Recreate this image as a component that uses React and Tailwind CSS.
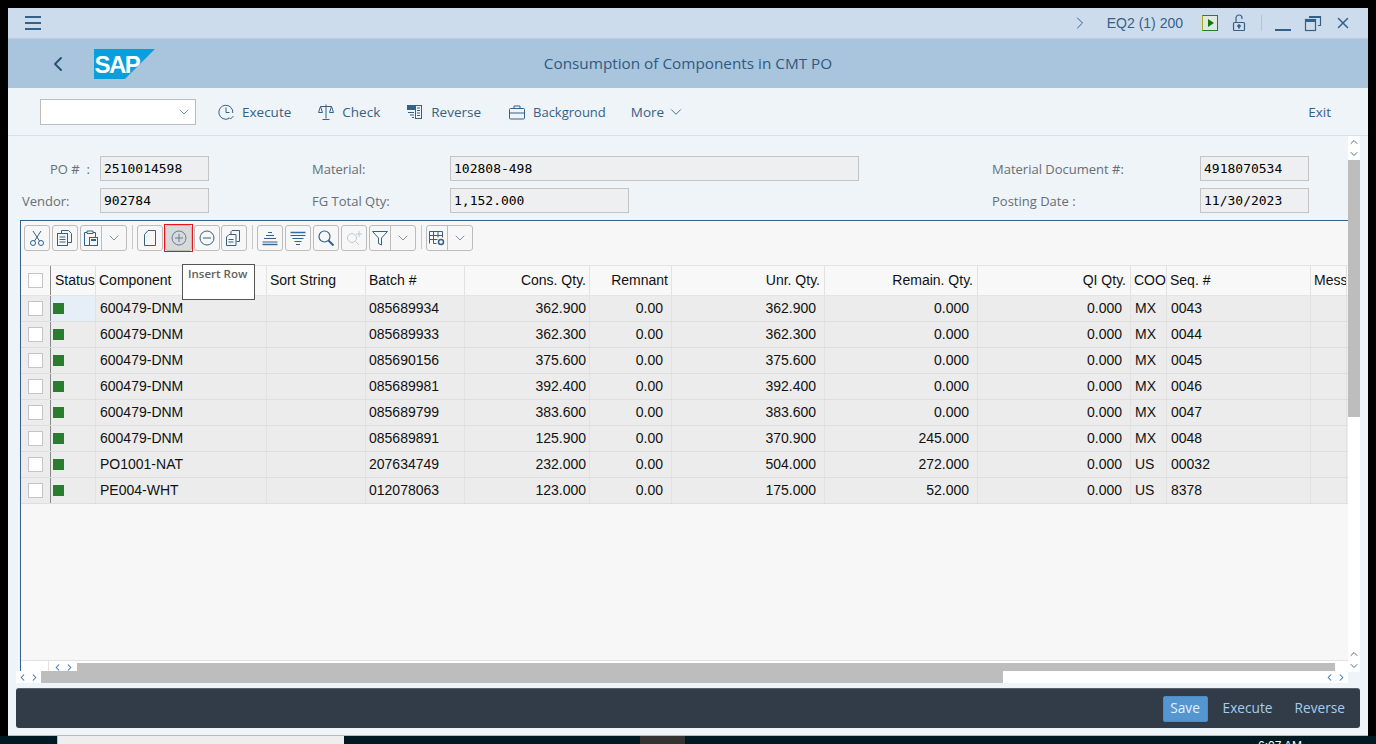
import { ChevronDown, ChevronLeft, ChevronRight, ChevronUp, X } from 'lucide-react'

const uiFont = "font-['Open_Sans',sans-serif]"
const blue = '#346187'

const columns = [
  { label: 'Status', width: 'w-[45px]', head: 'pl-[4px] pr-0', cell: '' },
  { label: 'Component', width: 'w-[171px]', head: 'px-[3px]', cell: 'pl-[4px]' },
  { label: 'Sort String', width: 'w-[99px]', head: 'px-[3px]', cell: 'pl-[4px]' },
  { label: 'Batch #', width: 'w-[99px]', head: 'px-[3px]', cell: 'pl-[3px]' },
  { label: 'Cons. Qty.', width: 'w-[125px]', head: 'justify-end pr-[3px]', cell: 'justify-end pr-[3px]' },
  { label: 'Remnant', width: 'w-[82px]', head: 'justify-end pr-[3px]', cell: 'justify-end pr-[8px]' },
  { label: 'Unr. Qty.', width: 'w-[153px]', head: 'justify-end pr-[4px]', cell: 'justify-end pr-[8px]' },
  { label: 'Remain. Qty.', width: 'w-[153px]', head: 'justify-end pr-[4px]', cell: 'justify-end pr-[8px]' },
  { label: 'QI Qty.', width: 'w-[153px]', head: 'justify-end pr-[4px]', cell: 'justify-end pr-[8px]' },
  { label: 'COO', width: 'w-[36px]', head: 'px-[3px]', cell: 'pl-[4px]' },
  { label: 'Seq. #', width: 'w-[144px]', head: 'px-[3px]', cell: 'pl-[4px]' },
  { label: 'Mess', width: 'w-[36px]', head: 'px-[3px]', cell: 'pl-[4px]' },
]

const rows = [
  ['600479-DNM', '085689934', '362.900', '0.00', '362.900', '0.000', '0.000', 'MX', '0043'],
  ['600479-DNM', '085689933', '362.300', '0.00', '362.300', '0.000', '0.000', 'MX', '0044'],
  ['600479-DNM', '085690156', '375.600', '0.00', '375.600', '0.000', '0.000', 'MX', '0045'],
  ['600479-DNM', '085689981', '392.400', '0.00', '392.400', '0.000', '0.000', 'MX', '0046'],
  ['600479-DNM', '085689799', '383.600', '0.00', '383.600', '0.000', '0.000', 'MX', '0047'],
  ['600479-DNM', '085689891', '125.900', '0.00', '370.900', '245.000', '0.000', 'MX', '0048'],
  ['PO1001-NAT', '207634749', '232.000', '0.00', '504.000', '272.000', '0.000', 'US', '00032'],
  ['PE004-WHT', '012078063', '123.000', '0.00', '175.000', '52.000', '0.000', 'US', '8378'],
]

function Glyph({ children, size = 18, color = blue, box = 18 }) {
  return (
    <svg width={size} height={size} viewBox={`0 0 ${box} ${box}`} fill="none" stroke={color} strokeWidth="1" className="shrink-0">
      {children}
    </svg>
  )
}

function ToolButton({ children, className = '' }) {
  return (
    <div className={`flex h-[26px] w-[26px] shrink-0 items-center justify-center rounded-[3px] border border-[#bcbcbc] bg-[#f7f7f7] ${className}`}>
      {children}
    </div>
  )
}

function ActiveToolButton({ children, className = '' }) {
  return (
    <div className={`relative flex h-[26px] w-[27px] shrink-0 items-center justify-center rounded-[3px] border border-[#bcbcbc] bg-[#d9d9d9] ${className}`}>
      {children}
      <div className="absolute inset-[-2px] border-[1.5px] border-[#e8131b]" />
    </div>
  )
}

function SplitButton({ children, className = '' }) {
  return (
    <div className={`flex h-[26px] w-[47px] shrink-0 items-center rounded-[3px] border border-[#bcbcbc] bg-[#f7f7f7] ${className}`}>
      <div className="flex flex-1 items-center justify-center self-stretch border-r border-[#bcbcbc]">{children}</div>
      <div className="flex w-[24px] items-center justify-center">
        <ChevronDown size={16} strokeWidth={1} color={blue} />
      </div>
    </div>
  )
}

function Divider() {
  return <div className="ml-[5px] mr-[4px] h-[24px] w-px shrink-0 bg-[#c9c9c9]" />
}

function ActionLink({ icon, label, className, textSize = 'text-[13.5px]' }) {
  return (
    <div className={`flex items-center gap-[7px] ${className}`}>
      {icon}
      <span className={`pt-[2px] text-[#346187] ${textSize}`}>{label}</span>
    </div>
  )
}

function ValueBox({ value, className }) {
  return (
    <div className={`flex h-[25px] items-center border border-[#c4c4c4] bg-[#eeeff0] pl-[3px] font-['DejaVu_Sans_Mono',monospace] text-[13px] text-black ${className}`}>
      {value}
    </div>
  )
}

function FormLabel({ children, className }) {
  return <div className={`pt-[2px] text-[13px] text-[#666e76] ${className}`}>{children}</div>
}

function Cell({ width, className = '', children }) {
  return (
    <div className={`flex h-full shrink-0 items-center overflow-hidden whitespace-nowrap border-r border-[#e2e2e2] ${width} ${className}`}>
      {children}
    </div>
  )
}

function Checkbox() {
  return (
    <div className="flex h-full w-[30px] shrink-0 items-center justify-center border-r border-[#8a8a8a]">
      <div className="h-[15px] w-[15px] border border-[#c4c4c4] bg-white" />
    </div>
  )
}

function TableRow({ row, index }) {
  const [component, batch, cons, remnant, unr, remain, qi, coo, seq] = row
  const values = [null, component, '', batch, cons, remnant, unr, remain, qi, coo, seq, '']
  return (
    <div className="flex h-[26px] border-b border-[#dedede] bg-[#ececec] text-[14px] text-[#111]">
      <Checkbox />
      {columns.map((col, i) => (
        <Cell key={col.label} width={col.width} className={`${col.cell} ${i === 0 && index === 0 ? 'bg-[#e6eef7]' : ''}`}>
          {i === 0 ? <div className="ml-[2px] h-[11px] w-[11px] bg-[#2a7d2e]" /> : values[i]}
        </Cell>
      ))}
    </div>
  )
}

function ScrollArrows({ className = '' }) {
  return (
    <div className={`flex items-center gap-[1px] ${className}`}>
      <ChevronLeft size={11} strokeWidth={2.2} color="#2a6db0" />
      <ChevronRight size={11} strokeWidth={2.2} color="#2a6db0" />
    </div>
  )
}

function VerticalArrows() {
  return (
    <div className="flex h-[24px] flex-col items-center justify-center bg-white">
      <ChevronUp size={12} strokeWidth={1.8} color={blue} />
      <ChevronDown size={12} strokeWidth={1.8} color={blue} />
    </div>
  )
}

function SapLogo() {
  return (
    <svg width="62" height="30" viewBox="0 0 62 30" className="block">
      <polygon points="0,0 61,0 31,30 0,30" fill="#0a9fdc" />
      <text x="0.5" y="23.5" fill="#fff" fontFamily="Liberation Sans" fontWeight="700" fontSize="24" letterSpacing="-1.6">SAP</text>
    </svg>
  )
}

export default function App() {
  return (
    <div className={`relative h-[744px] w-[1376px] overflow-hidden bg-black ${uiFont}`}>
      <div className="ml-2 flex h-[736px] w-[1360px] flex-col pt-2">
        <div className="flex h-[31px] shrink-0 items-center border-b border-[#bccbdb] bg-[#cddced] pl-[17px] pr-[16px]">
          <div className="flex w-[16px] flex-col gap-[4px]">
            <div className="h-[2px] bg-[#346187]" />
            <div className="h-[2px] bg-[#346187]" />
            <div className="h-[2px] bg-[#346187]" />
          </div>
          <div className="flex-1" />
          <ChevronRight size={20} strokeWidth={1.2} color={blue} />
          <span className="ml-[17px] font-['Liberation_Sans',sans-serif] text-[14px] text-[#346187]">EQ2 (1) 200</span>
          <div className="ml-[19px] flex h-[16px] w-[16px] items-center justify-center border border-[#2a7d2e] bg-[#dfe9df] [border-left-color:#a9a81e]">
            <div className="ml-px h-0 w-0 border-y-[4px] border-l-[6px] border-y-transparent border-l-[#0c7a14]" />
          </div>
          <div className="ml-[12px]">
            <Glyph size={18}>
              <rect x="3.5" y="8.5" width="11" height="8" rx="1" strokeWidth="1.2" />
              <path d="M6 8V4a3 3 0 0 1 6 0v1" strokeWidth="1.2" />
              <circle cx="9" cy="12" r="1.3" fill={blue} />
              <path d="M9 12v3" />
            </Glyph>
          </div>
          <div className="ml-[13px] h-[16px] w-px bg-[#b6c4d2]" />
          <div className="ml-[13px] mt-[13px] h-[2px] w-[16px] bg-[#346187]" />
          <div className="ml-[13px]">
            <Glyph size={18}>
              <rect x="1.5" y="5.5" width="10" height="11" strokeWidth="1.2" />
              <path d="M1.5 7h10" strokeWidth="2" />
              <path d="M5 2.5h11.5v9H14" strokeWidth="1.2" />
              <path d="M5 3h11.5" strokeWidth="2" />
            </Glyph>
          </div>
          <X size={18} strokeWidth={2} color={blue} className="ml-[12px]" />
        </div>

        <div className="flex h-[49px] shrink-0 items-center bg-[#a9c4dd]">
          <ChevronLeft size={24} strokeWidth={2} color="#2e5272" className="ml-[38px]" />
          <div className="ml-[24px]">
            <SapLogo />
          </div>
          <div className="flex-1 pr-[148px] text-center text-[15.3px] text-[#2f5a80]">Consumption of Components in CMT PO</div>
        </div>

        <div className="flex h-[48px] shrink-0 items-center border-b border-[#d5e1ee] bg-[#eff4f9] pl-[32px] pr-[37px]">
          <div className="flex h-[26px] w-[156px] items-center justify-end border border-[#bcbcbc] bg-white pr-[3px]">
            <ChevronDown size={16} strokeWidth={1} color={blue} />
          </div>
          <ActionLink
            className="ml-[21px]"
            label="Execute"
            icon={
              <Glyph>
                <path d="M12 15.5A7 7 0 1 1 15.8 10" />
                <path d="M9 4.5V9.5H12.5" />
                <path d="M12 14.5l1.5 1.5 3-3" />
              </Glyph>
            }
          />
          <ActionLink
            className="ml-[26px]"
            label="Check"
            icon={
              <Glyph>
                <path d="M9 1.5V15.5M5.5 16.5h7M3.5 3.5h11" />
                <path d="M3.5 3.5L1.5 9.5h4zM14.5 3.5l-2 6h4z" />
              </Glyph>
            }
          />
          <ActionLink
            className="ml-[26px]"
            label="Reverse"
            icon={
              <Glyph>
                <rect x="1" y="2" width="8" height="5" fill={blue} stroke="none" />
                <rect x="9.5" y="2.5" width="6" height="13" />
                <path d="M11 5h3M11 7.5h3M11 10h3M11 12.5h3M2 9.5h6M4 12h4M6 14.5h2" />
              </Glyph>
            }
          />
          <ActionLink
            className="ml-[27px]"
            label="Background"
            textSize="text-[13px]"
            icon={
              <Glyph>
                <rect x="1.5" y="5.5" width="15" height="10.5" rx="1" />
                <path d="M6 5.5V3h6v2.5M1.5 10h15" />
              </Glyph>
            }
          />
          <div className="ml-[25px] flex items-center gap-[3px] text-[13.5px] text-[#346187]">
            <span className="pt-[2px]">More</span>
            <ChevronDown size={18} strokeWidth={1.2} color={blue} />
          </div>
          <div className="flex-1" />
          <span className="pt-[2px] text-[13.5px] text-[#346187]">Exit</span>
        </div>

        <div className="flex min-h-0 flex-1 bg-[#eff4f9]">
          <div className="flex w-[1340px] flex-col">
            <div className="flex h-[84px] shrink-0 pt-[20px]">
              <div className="flex w-[304px] flex-col gap-[7px] pl-[14px]">
                <div className="flex h-[25px] items-center">
                  <FormLabel className="w-[78px] pl-[28px]">PO #&nbsp; :</FormLabel>
                  <ValueBox value="2510014598" className="w-[109px]" />
                </div>
                <div className="flex h-[25px] items-center">
                  <FormLabel className="w-[78px]">Vendor:</FormLabel>
                  <ValueBox value="902784" className="w-[109px]" />
                </div>
              </div>
              <div className="flex w-[680px] flex-col gap-[7px]">
                <div className="flex h-[25px] items-center">
                  <FormLabel className="w-[138px]">Material:</FormLabel>
                  <ValueBox value="102808-498" className="w-[409px]" />
                </div>
                <div className="flex h-[25px] items-center">
                  <FormLabel className="w-[138px]">FG Total Qty:</FormLabel>
                  <ValueBox value="1,152.000" className="w-[179px]" />
                </div>
              </div>
              <div className="flex flex-col gap-[7px]">
                <div className="flex h-[25px] items-center">
                  <FormLabel className="w-[208px]">Material Document #:</FormLabel>
                  <ValueBox value="4918070534" className="w-[109px]" />
                </div>
                <div className="flex h-[25px] items-center">
                  <FormLabel className="w-[208px]">Posting Date :</FormLabel>
                  <ValueBox value="11/30/2023" className="w-[109px]" />
                </div>
              </div>
            </div>

            <div className="relative ml-[12px] flex min-h-0 flex-1 flex-col border-l border-t border-[#346187] bg-[#f7f7f7]">
              <div className="flex h-[43px] shrink-0 items-start pl-[3px] pt-[4px]">
                <ToolButton>
                  <Glyph>
                    <circle cx="5" cy="14" r="2.5" />
                    <circle cx="13" cy="14" r="2.5" />
                    <path d="M6.5 12L13 2M11.5 12L5 2" />
                  </Glyph>
                </ToolButton>
                <ToolButton className="ml-[2px]">
                  <Glyph>
                    <rect x="1.5" y="4.5" width="10" height="12" fill="#f7f7f7" />
                    <path d="M5.5 4V1.5h7l3 3v9H12M3.5 8h6M3.5 10.5h6M3.5 13h6" />
                  </Glyph>
                </ToolButton>
                <SplitButton className="ml-[2px]">
                  <Glyph>
                    <path d="M5 3.5H2.5v13H7" />
                    <path d="M5 4.5h6V2H5zM11 3.5h2.5V8" />
                    <rect x="7.5" y="8.5" width="8" height="8" />
                    <path d="M9 11h5" strokeWidth="2" />
                  </Glyph>
                </SplitButton>
                <Divider />
                <ToolButton>
                  <Glyph>
                    <path d="M3.5 5.5L7 1.5h7.5v15h-11z" />
                  </Glyph>
                </ToolButton>
                <ActiveToolButton className="ml-[2px]">
                  <Glyph color="#5d7f9e">
                    <circle cx="9" cy="9" r="7" />
                    <path d="M9 5v8M5 9h8" />
                  </Glyph>
                </ActiveToolButton>
                <ToolButton className="ml-[2px]">
                  <Glyph>
                    <circle cx="9" cy="9" r="7" />
                    <path d="M5 9h8" />
                  </Glyph>
                </ToolButton>
                <ToolButton className="ml-[1px]">
                  <Glyph>
                    <path d="M1.5 8L4 5.5h7v11H1.5z" />
                    <path d="M6 5V2.5l1-1h7.5v11H11.5M3.5 10.5h5M3.5 13h5" />
                  </Glyph>
                </ToolButton>
                <Divider />
                <ToolButton>
                  <Glyph>
                    <path d="M7 3.5h4M5 6.5h8M3 9.5h12M1.5 13h15" />
                    <path d="M1.5 15.5h15" stroke="#2e6ea5" strokeWidth="1.5" />
                  </Glyph>
                </ToolButton>
                <ToolButton className="ml-[2px]">
                  <Glyph>
                    <path d="M1.5 3.5h15" stroke="#2e6ea5" strokeWidth="1.5" />
                    <path d="M1.5 6.5h15M3.5 9.5h11M5.5 12.5h7M7 15.5h4" />
                  </Glyph>
                </ToolButton>
                <ToolButton className="ml-[2px]">
                  <Glyph>
                    <circle cx="7.5" cy="7.5" r="5.5" strokeWidth="1.2" />
                    <path d="M11.5 11.5l5 5" strokeWidth="2" />
                  </Glyph>
                </ToolButton>
                <ToolButton className="ml-[2px]">
                  <Glyph color="#bccbd8">
                    <circle cx="7" cy="9" r="4.5" />
                    <path d="M10.5 12.5l3.5 3.5M14 2v6M11 5h6" />
                  </Glyph>
                </ToolButton>
                <SplitButton className="ml-[2px]">
                  <Glyph>
                    <path d="M1.5 2.5h15L10.5 9v7l-3-1.5V9z" />
                  </Glyph>
                </SplitButton>
                <Divider />
                <SplitButton>
                  <Glyph>
                    <path d="M1.5 14.5v-12h13v6M1.5 6.5h13M1.5 10.5h8M5.5 2.5v12h3M10 2.5v6" />
                    <circle cx="13" cy="13" r="2.5" strokeWidth="1.5" />
                  </Glyph>
                </SplitButton>
              </div>

              <div className="mt-[1px] min-h-0 flex-1 overflow-hidden border-b border-[#e2e2e2]">
                <div className="flex h-[31px] border-y border-[#e4e4e4] bg-[#f8f8f8] font-['Liberation_Sans',sans-serif] text-[14px] text-[#111]">
                  <Checkbox />
                  {columns.map((col) => (
                    <Cell key={col.label} width={col.width} className={col.head}>
                      {col.label}
                    </Cell>
                  ))}
                </div>
                <div className="font-['Liberation_Sans',sans-serif]">
                  {rows.map((row, index) => (
                    <TableRow key={row[1]} row={row} index={index} />
                  ))}
                </div>
              </div>

              <div className="flex h-[10px] shrink-0 overflow-hidden bg-white">
                <div className="w-[28px] shrink-0 border-r border-[#e2e2e2]" />
                <ScrollArrows className="mt-[3px] w-[28px] shrink-0 justify-center" />
                <div className="mt-[2px] w-[1258px] bg-[#bdbdbd]" />
              </div>

              <div className="absolute left-[161px] top-[43px] h-[36px] w-[73px] border border-[#555] bg-white pl-[5px] pt-[1px] text-[11.5px] font-semibold leading-[16px] text-[#606060]">
                Insert Row
              </div>
            </div>

            <div className="ml-[8px] flex h-[12px] shrink-0 bg-white">
              <ScrollArrows className="w-[25px] shrink-0 justify-center" />
              <div className="w-[962px] bg-[#bdbdbd]" />
              <div className="flex-1" />
              <ScrollArrows className="w-[25px] shrink-0 justify-center" />
            </div>
          </div>

          <div className="flex h-[536px] w-[12px] flex-col">
            <VerticalArrows />
            <div className="h-[257px] bg-[#bdbdbd]" />
            <div className="flex-1 bg-white" />
            <VerticalArrows />
          </div>
        </div>

        <div className="shrink-0 border-b border-[#bbbbbb] bg-[#eff4f9] px-[8px] pb-[7px] pt-[5px]">
          <div className="flex h-[40px] items-center justify-end rounded-[3px] border-t border-[#566270] bg-[#323c48] pr-[15px] text-[13.7px] text-[#a5cdf0]">
            <div className="flex h-[26px] w-[45px] items-center justify-center rounded-[2px] border border-[#4d8cc4] bg-[#5496d0] text-[#e4f0fb]">Save</div>
            <span className="ml-[15px]">Execute</span>
            <span className="ml-[22px]">Reverse</span>
          </div>
        </div>
      </div>

      <div className="flex h-[8px] items-start bg-[#001a22]">
        <div className="ml-[57px] h-full w-[287px] border-l border-[#bbb] bg-[#eeeeee]" />
        <div className="ml-[296px] h-full w-[45px] bg-[#333]" />
        <span className="ml-[573px] font-['Liberation_Sans',sans-serif] text-[12px] leading-[20px] text-white">6:07 AM</span>
      </div>
    </div>
  )
}
